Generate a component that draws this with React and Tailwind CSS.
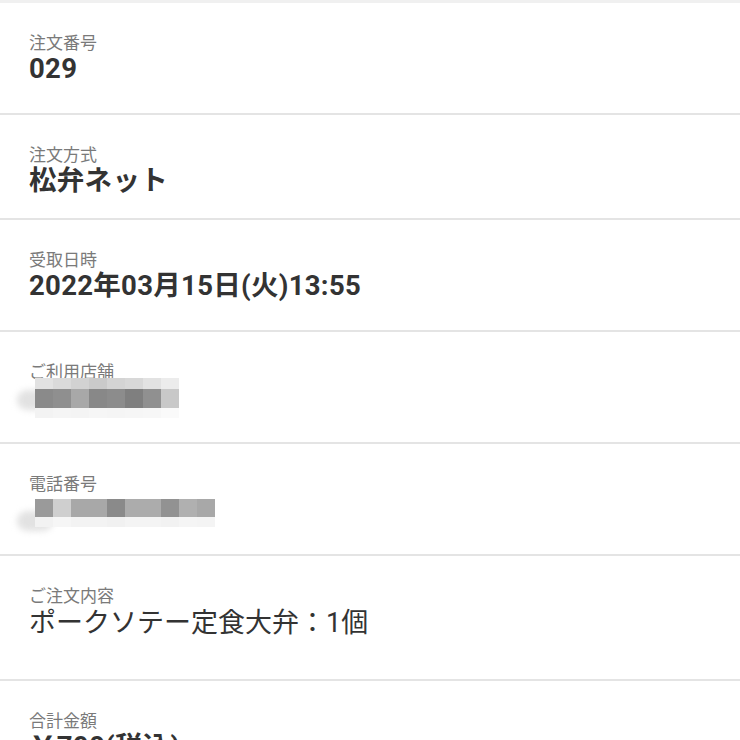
const font = { fontFamily: 'Roboto, "Noto Sans CJK JP", sans-serif' }

function Pixels({ rows, top }) {
  return (
    <div className={`relative h-[40px] ${top}`}>
      <div className="absolute left-[-12px] top-[12px] h-[20px] w-[36px] rounded-full bg-[#e2e2e2] blur-[3px]" />
      <div className="relative ml-[6px] flex flex-col">
        {rows.map((row, i) => (
          <div key={i} className="flex">
            {row.colors.map((c, j) => (
              <div key={j} className="w-[18px]" style={{ height: row.h, background: c }} />
            ))}
          </div>
        ))}
      </div>
    </div>
  )
}

function Row({ label, children, h }) {
  return (
    <div className={`border-b-2 border-[#e4e4e4] bg-white px-[29px] pt-[29px] ${h}`}>
      <div className="text-[17px] leading-[22px] text-[#7a7a7a]">{label}</div>
      {children}
    </div>
  )
}

function Value({ children }) {
  return (
    <div className="text-[27.5px] font-bold leading-[30px] tracking-[0.3px] text-[#333]">
      {children}
    </div>
  )
}

export default function App() {
  return (
    <div className="min-h-screen bg-white" style={font}>
      <div className="h-[3px] bg-[#f0f0f0]" />
      <Row label="注文番号" h="h-[112px]">
        <Value>029</Value>
      </Row>
      <Row label="注文方式" h="h-[105px]">
        <Value>松弁ネット</Value>
      </Row>
      <Row label="受取日時" h="h-[112px]">
        <Value>2022年03月15日(火)13:55</Value>
      </Row>
      <Row label="ご利用店舗" h="h-[112px]">
        <Pixels
          top="mt-[-5px]"
          rows={[
            { h: 11, colors: ['#e2e2e2', '#dadada', '#d2d2d2', '#cacaca', '#d4d4d4', '#d8d8d8', '#e2e2e2', '#ececec'] },
            { h: 19, colors: ['#8a8a8a', '#8f8f8f', '#a8a8a8', '#888888', '#8c8c8c', '#7f7f7f', '#909090', '#c8c8c8'] },
            { h: 10, colors: ['#f3f3f3', '#f5f5f5', '#f4f4f4', '#f6f6f6', '#f5f5f5', '#f6f6f6', '#f7f7f7', '#fafafa'] },
          ]}
        />
      </Row>
      <Row label="電話番号" h="h-[112px]">
        <Pixels
          top="mt-[4px]"
          rows={[
            { h: 18, colors: ['#9a9a9a', '#cfcfcf', '#a8a8a8', '#a8a8a8', '#8a8a8a', '#acacac', '#acacac', '#929292', '#b0b0b0', '#a8a8a8'] },
            { h: 10, colors: ['#f2f2f2', '#f6f6f6', '#f3f3f3', '#f3f3f3', '#f1f1f1', '#f4f4f4', '#f4f4f4', '#f2f2f2', '#f5f5f5', '#f4f4f4'] },
          ]}
        />
      </Row>
      <Row label="ご注文内容" h="h-[125px]">
        <div className="text-[27px] leading-[32px] text-[#333]">ポークソテー定食大弁：1個</div>
      </Row>
      <Row label="合計金額" h="h-[125px]">
        <Value>￥790(税込)</Value>
      </Row>
    </div>
  )
}
